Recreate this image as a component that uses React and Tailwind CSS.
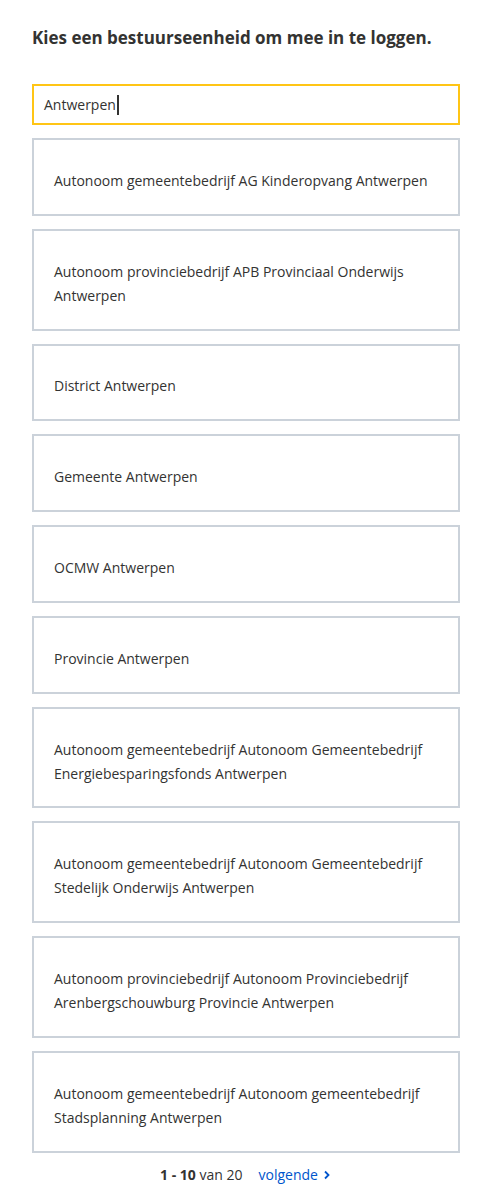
const units = [
  'Autonoom gemeentebedrijf AG Kinderopvang Antwerpen',
  'Autonoom provinciebedrijf APB Provinciaal Onderwijs Antwerpen',
  'District Antwerpen',
  'Gemeente Antwerpen',
  'OCMW Antwerpen',
  'Provincie Antwerpen',
  'Autonoom gemeentebedrijf Autonoom Gemeentebedrijf Energiebesparingsfonds Antwerpen',
  'Autonoom gemeentebedrijf Autonoom Gemeentebedrijf Stedelijk Onderwijs Antwerpen',
  'Autonoom provinciebedrijf Autonoom Provinciebedrijf Arenbergschouwburg Provincie Antwerpen',
  'Autonoom gemeentebedrijf Autonoom gemeentebedrijf Stadsplanning Antwerpen',
];

const UnitItem = ({ name }) => (
  <button className="w-full text-left border-2 border-[#cbd2da] bg-white px-5 pt-[28.9px] pb-[20.9px] text-[14px] leading-6 text-[#333332]">
    {name}
  </button>
);

export default function App() {
  return (
    <div className="min-h-[1188px] bg-white pl-8 pr-5 pt-[26px] font-['Open_Sans',sans-serif] text-[#333332]">
      <h1 className="text-[17px] font-bold leading-6">Kies een bestuurseenheid om mee in te loggen.</h1>

      {/* search field, drawn with its caret */}
      <div className="mt-[34px] flex h-[41px] w-full items-center border-2 border-[#ffc515] px-[10px] text-[14px] text-[#333332]">
        <span>Antwerpen</span>
        <span className="ml-px inline-block h-[20px] w-[2px] bg-[#333332]" />
      </div>

      <div className="mt-[13px] flex flex-col gap-[13px]">
        {units.map((u) => (
          <UnitItem key={u} name={u} />
        ))}
      </div>

      <div className="mt-[10px] flex items-center justify-center gap-4 text-[14px] leading-6">
        <span>
          <strong className="font-bold">1 - 10</strong> van 20
        </span>
        <a href="#" className="flex items-center gap-1 text-[#0055cc]">
          volgende
          <svg width="10" height="10" viewBox="0 0 10 10" fill="none" stroke="currentColor" strokeWidth="1.8">
            <path d="M3 1.5 6.5 5 3 8.5" />
          </svg>
        </a>
      </div>
    </div>
  );
}
